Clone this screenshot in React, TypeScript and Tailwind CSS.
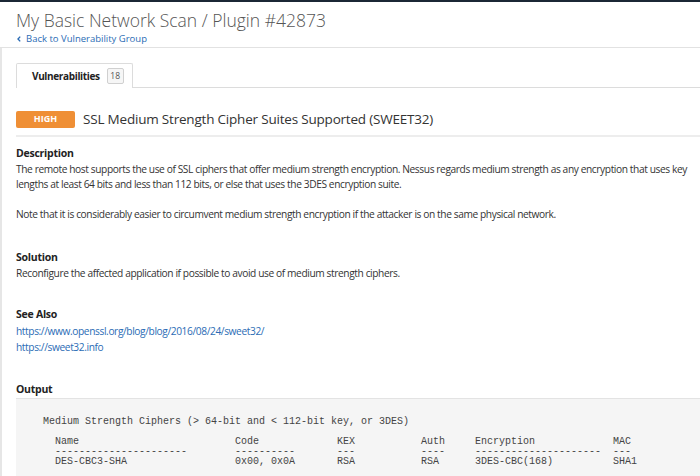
import React from "react"

const body = "font-['Open_Sans','Noto_Sans',sans-serif]"

function Section({ title, children, className = "" }: { title: string; children: React.ReactNode; className?: string }) {
  return (
    <section className={className}>
      <h3 className="text-[10.5px] font-bold leading-[18px] tracking-[-0.25px] text-[#222]">{title}</h3>
      <div className="whitespace-nowrap text-[10.2px] leading-[15px] tracking-[-0.4px] text-[#333]">{children}</div>
    </section>
  )
}

const output = `  Medium Strength Ciphers (> 64-bit and < 112-bit key, or 3DES)

    Name                          Code             KEX           Auth     Encryption             MAC
    ----------------------        ----------       ---           ----     ---------------------  ---
    DES-CBC3-SHA                  0x00, 0x0A       RSA           RSA      3DES-CBC(168)          SHA1`

export default function App() {
  return (
    <div className={`h-[476px] w-[700px] overflow-hidden bg-white ${body}`}>
      <div className="h-[2px] bg-[#1b2735]" />

      {/* page header */}
      <div className="h-[46px] border-b border-[#e2e2e2] px-4 pt-[6px]">
        <h1 className="text-[17.5px] font-light leading-[24px] text-[#555]">
          My Basic Network Scan / Plugin #42873
        </h1>
        <a className="flex items-center gap-[5px] pl-[1px] text-[9.5px] leading-[14px] text-[#2b6cb5]">
          <svg width="4" height="6" viewBox="0 0 4 6" className="shrink-0">
            <path d="M3.2 0.6 L1 3 L3.2 5.4" fill="none" stroke="currentColor" strokeWidth="1.4" />
          </svg>
          Back to Vulnerability Group
        </a>
      </div>

      <div className="h-[430px] border-l-2 border-[#e6e6e6] pl-[14px] pt-[15px]">
        {/* tabs */}
        <div className="flex border-b border-[#dcdcdc]">
          <div className="-mb-px flex h-[25px] items-center gap-[7px] rounded-t-[2px] border border-b-0 border-[#dcdcdc] bg-white pl-[15px] pr-[8px]">
            <span className="text-[10px] font-bold tracking-[-0.35px] text-[#222]">Vulnerabilities</span>
            <span className="flex h-[16px] w-[17px] items-center justify-center rounded-[2px] border border-[#d0d0d0] bg-[#f6f6f6] text-[8.5px] text-[#555]">
              18
            </span>
          </div>
        </div>

        {/* plugin title */}
        <div className="mt-[22px] flex items-center gap-2 border-b-2 border-[#ededed] pb-[7px]">
          <span className="flex h-[17px] w-[59px] items-center justify-center rounded-[2px] bg-[#ef8f35] text-[9px] font-bold text-white">
            HIGH
          </span>
          <h2 className="text-[13.5px] leading-[18px] tracking-[-0.2px] text-[#333]">
            SSL Medium Strength Cipher Suites Supported (SWEET32)
          </h2>
        </div>

        <Section title="Description" className="mt-[7px]">
          <p>
            The remote host supports the use of SSL ciphers that offer medium strength encryption. Nessus regards
            medium strength as any encryption that uses key
            <br />
            lengths at least 64 bits and less than 112 bits, or else that uses the 3DES encryption suite.
          </p>
          <p className="mt-[15px]">
            Note that it is considerably easier to circumvent medium strength encryption if the attacker is on the same
            physical network.
          </p>
        </Section>

        <Section title="Solution" className="mt-[26px]">
          <p>Reconfigure the affected application if possible to avoid use of medium strength ciphers.</p>
        </Section>

        <Section title="See Also" className="mt-[24px]">
          <a className="block leading-[16px] text-[#2b6cb5]">https://www.openssl.org/blog/blog/2016/08/24/sweet32/</a>
          <a className="block leading-[16px] text-[#2b6cb5]">https://sweet32.info</a>
        </Section>

        <section className="mt-[25px]">
          <h3 className="text-[10.5px] font-bold leading-[18px] tracking-[-0.25px] text-[#222]">Output</h3>
          <pre className="mt-0 h-[100px] border-t border-[#e3e3e3] bg-[#f5f5f5] pl-[15px] pt-[18px] font-['Liberation_Mono','Courier_New',monospace] text-[10px] leading-[10px] text-[#444]">
            {output}
          </pre>
        </section>
      </div>
    </div>
  )
}
